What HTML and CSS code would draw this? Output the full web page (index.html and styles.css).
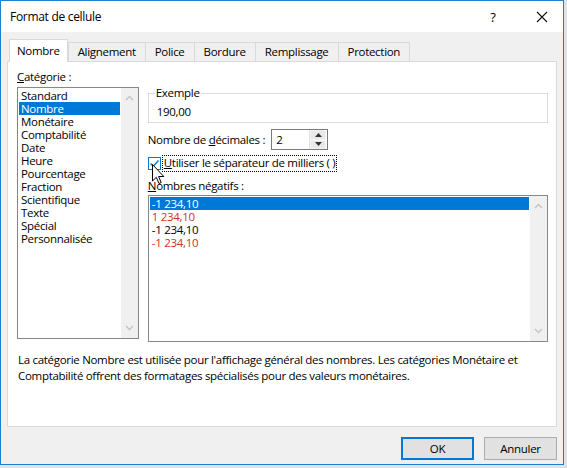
FILE: index.html
```html
<!DOCTYPE html>
<html lang="fr">
<head>
<meta charset="utf-8">
<title>Format de cellule</title>
<link rel="stylesheet" href="styles.css">
</head>
<body>
<div class="window">
  <div class="titlebar">
    <span class="title">Format de cellule</span>
    <span class="help">?</span>
    <span class="close">
      <svg width="12" height="12" viewBox="0 0 12 12"><path d="M1 1 L11 11 M11 1 L1 11" stroke="#111" stroke-width="1.1" fill="none"/></svg>
    </span>
  </div>
  <div class="content">
    <div class="tabs">
      <div class="tab active">Nombre</div>
      <div class="tab">Alignement</div>
      <div class="tab">Police</div>
      <div class="tab">Bordure</div>
      <div class="tab">Remplissage</div>
      <div class="tab">Protection</div>
    </div>
    <div class="panel">
      <div class="columns">
        <div class="left">
          <div class="label"><u>C</u>atégorie :</div>
          <div class="listbox cat">
            <div class="items">
              <div class="item">Standard</div>
              <div class="item selected">Nombre</div>
              <div class="item">Monétaire</div>
              <div class="item">Comptabilité</div>
              <div class="item">Date</div>
              <div class="item">Heure</div>
              <div class="item">Pourcentage</div>
              <div class="item">Fraction</div>
              <div class="item">Scientifique</div>
              <div class="item">Texte</div>
              <div class="item">Spécial</div>
              <div class="item">Personnalisée</div>
            </div>
            <div class="scrollbar">
              <svg width="9" height="6" viewBox="0 0 9 6"><path d="M1 5 L4.5 1.5 L8 5" stroke="#c2c2c2" stroke-width="1.3" fill="none"/></svg>
              <svg width="9" height="6" viewBox="0 0 9 6"><path d="M1 1 L4.5 4.5 L8 1" stroke="#c2c2c2" stroke-width="1.3" fill="none"/></svg>
            </div>
          </div>
        </div>
        <div class="right">
          <fieldset class="group">
            <legend>Exemple</legend>
            <div class="sample">190,00</div>
          </fieldset>
          <div class="row decimals">
            <span>Nombre de <u>d</u>écimales :</span>
            <div class="spin">
              <span class="spin-value">2</span>
              <div class="spin-btns">
                <div class="spin-btn"><svg width="7" height="4" viewBox="0 0 7 4"><path d="M0 4 L3.5 0 L7 4 Z" fill="#333"/></svg></div>
                <div class="spin-btn"><svg width="7" height="4" viewBox="0 0 7 4"><path d="M0 0 L3.5 4 L7 0 Z" fill="#333"/></svg></div>
              </div>
            </div>
          </div>
          <div class="row check">
            <span class="checkbox">
              <svg width="11" height="11" viewBox="0 0 11 11"><path d="M1.5 5.5 L4.2 8.3 L9.5 2.5" stroke="#0078d7" stroke-width="1.4" fill="none"/></svg>
            </span>
            <span class="focus"><u>U</u>tiliser le séparateur de milliers ( )</span>
          </div>
          <div class="label neg-label"><u>N</u>ombres négatifs :</div>
          <div class="listbox neg">
            <div class="items">
              <div class="item selected">-1 234,10</div>
              <div class="item red">1 234,10</div>
              <div class="item">-1 234,10</div>
              <div class="item red">-1 234,10</div>
            </div>
            <div class="scrollbar">
              <svg width="9" height="6" viewBox="0 0 9 6"><path d="M1 5 L4.5 1.5 L8 5" stroke="#c2c2c2" stroke-width="1.3" fill="none"/></svg>
              <svg width="9" height="6" viewBox="0 0 9 6"><path d="M1 1 L4.5 4.5 L8 1" stroke="#c2c2c2" stroke-width="1.3" fill="none"/></svg>
            </div>
          </div>
        </div>
      </div>
      <p class="desc">La catégorie Nombre est utilisée pour l'affichage général des nombres. Les catégories Monétaire et Comptabilité offrent des formatages spécialisés pour des valeurs monétaires.</p>
    </div>
    <div class="buttons">
      <button class="btn default">OK</button>
      <button class="btn">Annuler</button>
    </div>
  </div>
  <svg class="cursor" width="13" height="21" viewBox="0 0 13 21"><path d="M0.5 0.5 L0.5 17 L4.3 13.3 L7 19.5 L9.2 18.6 L6.6 12.5 L11.8 12.5 Z" fill="#fff" stroke="#000" stroke-width="1" stroke-linejoin="miter"/></svg>
</div>
</body>
</html>
```

FILE: styles.css
```css
* { box-sizing: border-box; }
html, body {
  margin: 0;
  padding: 0;
}
body {
  width: 567px;
  height: 468px;
  background: #dfe3e8;
  font-family: "Open Sans", "Noto Sans", sans-serif;
  font-size: 11.5px;
  letter-spacing: -0.3px;
  color: #000;
  overflow: hidden;
}
u { text-decoration: underline; text-underline-offset: 1px; }

.window {
  position: relative;
  width: 564px;
  height: 465px;
  border: 1px solid #1c7fcf;
  background: #f0f0f0;
  display: flex;
  flex-direction: column;
}

.titlebar {
  height: 31px;
  background: #fff;
  display: flex;
  align-items: center;
  padding-left: 9px;
  flex-shrink: 0;
}
.title { font-size: 12px; flex: 1; }
.help { font-size: 13px; width: 14px; margin-right: 36px; text-align: center; }
.close { width: 12px; height: 12px; display: flex; margin-right: 15px; }

.content {
  flex: 1;
  padding: 7px 6px 0 6px;
  display: flex;
  flex-direction: column;
}

.tabs {
  display: flex;
  align-items: flex-end;
  height: 22px;
  padding-left: 2px;
  position: relative;
  z-index: 1;
}
.tab {
  height: 19px;
  line-height: 18px;
  padding: 0 9px;
  border: 1px solid #d9d9d9;
  border-bottom: none;
  margin-left: -1px;
  background: #f0f0f0;
}
.tab.active {
  height: 23px;
  line-height: 21px;
  background: #fff;
  margin-left: 0;
  margin-bottom: -1px;
  padding: 0 7px;
}
.tab.active + .tab { margin-left: 0; }

.panel {
  width: 550px;
  height: 366px;
  background: #fff;
  border: 1px solid #d9d9d9;
  padding: 7px 8px 0 9px;
}

.columns {
  display: flex;
  gap: 9px;
}
.left { width: 122px; }
.right { width: 401px; padding-top: 16px; }

.label { line-height: 16px; height: 16px; }

.listbox {
  border: 1px solid #828790;
  display: flex;
  background: #fff;
}
.listbox .items { flex: 1; padding: 1px; }
.listbox .item {
  height: 13px;
  line-height: 13px;
  padding-left: 2px;
  white-space: nowrap;
}
.listbox .item.selected { background: #0078d7; color: #fff; }
.listbox .item.red { color: #d0312d; }
.scrollbar {
  width: 17px;
  background: #f0f0f0;
  display: flex;
  flex-direction: column;
  justify-content: space-between;
  align-items: center;
  padding: 7px 0 7px;
}
.cat { height: 252px; margin-top: 2px; }
.neg { height: 147px; margin-top: 1px; }
.neg-label { margin-top: 7px; }

.group {
  margin: 0;
  padding: 0 8px 0 8px;
  border: 1px solid #dcdcdc;
  height: 38px;
}
.group legend {
  padding: 0 1px;
  line-height: 16px;
  margin-left: -2px;
}
.sample { line-height: 16px; margin-top: 3px; }

.row { display: flex; align-items: center; }
.decimals { margin-top: 6px; height: 21px; }
.spin {
  margin-left: 6px;
  width: 57px;
  height: 21px;
  border: 1px solid #7a7a7a;
  display: flex;
  align-items: center;
}
.spin-value { flex: 1; padding-left: 4px; line-height: 16px; }
.spin-btns {
  width: 17px;
  height: 19px;
  display: flex;
  flex-direction: column;
  border-left: 1px solid #e0e0e0;
  margin-right: 1px;
}
.spin-btn {
  flex: 1;
  display: flex;
  align-items: center;
  justify-content: center;
  background: #e9e9e9;
  border: 1px solid #f4f4f4;
}
.check { margin-top: 6px; height: 15px; }
.checkbox {
  width: 13px;
  height: 13px;
  border: 1px solid #0078d7;
  background: #fff;
  display: flex;
  align-items: center;
  justify-content: center;
  margin-right: 2px;
}
.focus {
  outline: 1px dotted #000;
  outline-offset: 0;
  padding: 0 1px 0 1px;
  line-height: 14px;
  height: 15px;
}

.desc {
  margin: 10px 0 0 1px;
  line-height: 16px;
  width: 525px;
}

.buttons {
  display: flex;
  justify-content: flex-end;
  gap: 10px;
  margin-top: 10px;
  width: 550px;
}
.btn {
  font-family: inherit;
  font-size: inherit;
  letter-spacing: inherit;
  width: 73px;
  height: 23px;
  background: #e1e1e1;
  border: 1px solid #adadad;
  padding: 0;
  color: #000;
}
.btn.default {
  border: 2px solid #0078d7;
}

.cursor {
  position: absolute;
  left: 151px;
  top: 163px;
}
```
